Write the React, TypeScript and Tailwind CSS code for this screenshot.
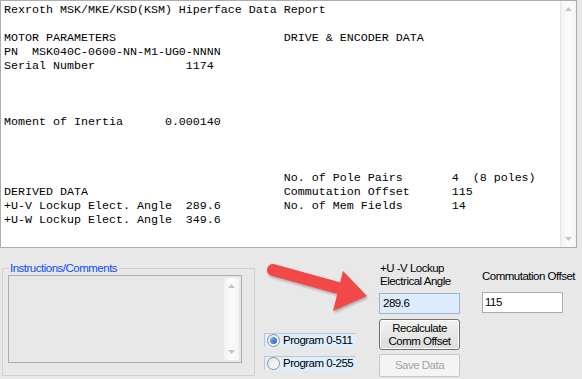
import React from 'react';

// place each piece of text at a fixed monospace column
const at = (parts: Array<[number, string]>) =>
  parts.reduce((line, [col, text]) => line.padEnd(col) + text, '');

const reportLines = [
  'Rexroth MSK/MKE/KSD(KSM) Hiperface Data Report',
  '',
  at([[0, 'MOTOR PARAMETERS'], [40, 'DRIVE & ENCODER DATA']]),
  at([[0, 'PN'], [4, 'MSK040C-0600-NN-M1-UG0-NNNN']]),
  at([[0, 'Serial Number'], [26, '1174']]),
  '',
  '',
  '',
  at([[0, 'Moment of Inertia'], [23, '0.000140']]),
  '',
  '',
  '',
  at([[40, 'No. of Pole Pairs'], [64, '4'], [67, '(8 poles)']]),
  at([[0, 'DERIVED DATA'], [40, 'Commutation Offset'], [64, '115']]),
  at([[0, '+U-V Lockup Elect. Angle'], [26, '289.6'], [40, 'No. of Mem Fields'], [64, '14']]),
  at([[0, '+U-W Lockup Elect. Angle'], [26, '349.6']]),
];

const ScrollArrow = ({ up }: { up?: boolean }) => (
  <svg width="7" height="4" viewBox="0 0 7 4">
    <path d={up ? 'M0 4 L3.5 0 L7 4 Z' : 'M0 0 L3.5 4 L7 0 Z'} fill="#c4c4c4" />
  </svg>
);

const ScrollBar = ({ className }: { className: string }) => (
  <div
    className={`flex flex-col items-center justify-between bg-gradient-to-r from-[#f2f2f2] via-[#fcfcfc] to-[#f4f4f4] py-[6px] ${className}`}
  >
    <ScrollArrow up />
    <ScrollArrow />
  </div>
);

const Radio = ({ label, checked }: { label: string; checked?: boolean }) => (
  <div className="flex h-[14px] w-[92px] items-center gap-[3px] border-l border-t border-[#b9c6d6] bg-[#ddeeff] pl-[2px]">
    <span className="flex h-[13px] w-[13px] items-center justify-center rounded-full border border-[#8f9193] bg-gradient-to-br from-[#e4e4e4] to-[#ffffff]">
      {checked && (
        <span className="h-[7px] w-[7px] rounded-full bg-gradient-to-br from-[#7fb6f5] to-[#1b5fc9]" />
      )}
    </span>
    <span>{label}</span>
  </div>
);

const RedArrow = () => (
  <svg
    className="absolute left-[262px] top-[10px] drop-shadow-[1px_2px_1px_rgba(0,0,0,0.25)]"
    width="110"
    height="58"
    viewBox="0 0 110 58"
  >
    <line x1="11" y1="12" x2="80" y2="31" stroke="#f24848" strokeWidth="12" strokeLinecap="round" />
    <polygon points="81,13 71,53 105,38" fill="#f24848" />
  </svg>
);

export default function App() {
  return (
    <div className="h-[379px] w-[582px] overflow-hidden bg-[#e8e8e8] font-['Liberation_Sans',Arial,sans-serif] text-[11.5px] tracking-[-0.5px] text-black">
      {/* Report view */}
      <div className="flex h-[248px] w-[577px] border border-[#adadad] bg-white">
        <pre className="flex-1 pl-[3px] pt-[2px] font-['Liberation_Mono',monospace] text-[11.67px] leading-[14px] tracking-normal text-black">
          {reportLines.join('\n')}
        </pre>
        <ScrollBar className="w-[16px] border-l border-[#e6e6e6]" />
      </div>

      {/* Bottom controls */}
      <div className="relative flex h-[131px]">
        <fieldset className="ml-[2px] mt-[13px] h-[115px] w-[252px] border border-[#d0d0d0] pb-[12px] pr-[12px]">
          <legend className="ml-[5px] px-[2px] leading-[14px] text-[#0a4cff]">Instructions/Comments</legend>
          <div className="ml-[5px] flex h-[88px] w-[234px] justify-end border border-[#adadad] bg-[#e8e8e8] p-[2px]">
            <ScrollBar className="w-[15px]" />
          </div>
        </fieldset>

        <div className="ml-[9px] flex flex-col gap-[9px] pt-[85px]">
          <Radio label="Program 0-511" checked />
          <Radio label="Program 0-255" />
        </div>

        <div className="ml-[23px] flex w-[81px] flex-col pt-[14px]">
          <div className="pl-[1px] leading-[12.5px]">
            +U -V Lockup
            <br />
            Electrical Angle
          </div>
          <div className="mt-[6px] flex h-[21px] items-center border border-[#a3b3c6] bg-[#dcecfc] pl-[3px]">289.6</div>
          <button className="mt-[5px] flex h-[31px] flex-col items-center justify-center rounded-[3px] border border-[#707070] bg-gradient-to-b from-[#f2f2f2] to-[#dcdcdc] leading-[13px] shadow-[inset_0_0_0_1px_#fcfcfc]">
            <span>Recalculate</span>
            <span>Comm Offset</span>
          </button>
          <button className="mt-[4px] h-[23px] rounded-[2px] border border-[#c6c6c6] bg-[#f4f4f4] text-[#a3a3a3]">
            Save Data
          </button>
        </div>

        <div className="ml-[22px] flex w-[81px] flex-col pt-[22px]">
          <div className="whitespace-nowrap leading-[13px]">Commutation Offset</div>
          <div className="mt-[9px] flex h-[21px] items-center border border-[#acacac] bg-white pl-[2px]">115</div>
        </div>

        <RedArrow />
      </div>
    </div>
  );
}
